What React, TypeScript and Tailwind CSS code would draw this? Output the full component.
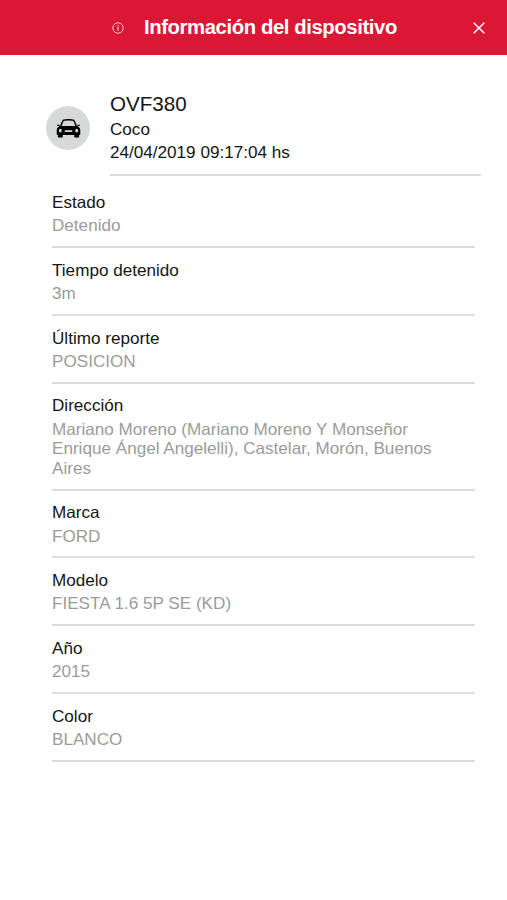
import React from 'react';

interface DeviceField {
  label: string;
  value: string;
}

const FIELDS: DeviceField[] = [
  { label: 'Estado', value: 'Detenido' },
  { label: 'Tiempo detenido', value: '3m' },
  { label: 'Último reporte', value: 'POSICION' },
  {
    label: 'Dirección',
    value: 'Mariano Moreno (Mariano Moreno Y Monseñor Enrique Ángel Angelelli), Castelar, Morón, Buenos Aires',
  },
  { label: 'Marca', value: 'FORD' },
  { label: 'Modelo', value: 'FIESTA 1.6 5P SE (KD)' },
  { label: 'Año', value: '2015' },
  { label: 'Color', value: 'BLANCO' },
];

const InfoIcon: React.FC = () => (
  <svg className="mt-0.5 h-3 w-3 opacity-75" viewBox="0 0 12 12" fill="none" stroke="white">
    <circle cx="6" cy="6" r="5.2" strokeWidth="1" />
    <path d="M6 4.900v4.200" strokeWidth="1.2" />
    <path d="M6 3v1.200" strokeWidth="1.2" />
  </svg>
);

const CloseIcon: React.FC = () => (
  <svg className="mt-px h-3 w-3" viewBox="0 0 12 12" fill="none" stroke="white" strokeWidth="1.5">
    <path d="M0.7 0.7l10.6 10.6M11.300 0.7L0.7 11.300" />
  </svg>
);

const CarIcon: React.FC = () => (
  <svg className="h-[19px] w-[25px]" viewBox="0 0 25 19" fill="black">
    {/* roof */}
    <path
      d="M4.500 7.800L6.600 2.600C7 1.500 7.500 1.100 8.600 1c2.600-.3 5.200-.3 7.800 0 1.100.1 1.600.5 2 1.600l2.100 5.200"
      fill="none"
      stroke="black"
      strokeWidth="1.500"
    />
    {/* body */}
    <path d="M3.500 7h18l1.700 1.600c.9.900 1.100 1.800 1.100 3V14.700c0 .8-.5 1.300-1.300 1.300H2c-.8 0-1.300-.5-1.300-1.300v-3.100c0-1.200.2-2.100 1.100-3z" />
    <path d="M.8 5.700h2.700v1.200H1.500zM24.200 5.700h-2.700v1.200h2z" />
    {/* wheels */}
    <rect x="1.900" y="16" width="4.800" height="2.400" rx="0.5" />
    <rect x="18.300" y="16" width="4.800" height="2.400" rx="0.5" />
    {/* lights and grille */}
    <ellipse cx="4.300" cy="11.600" rx="1.400" ry="1.900" fill="#d7d9d8" />
    <ellipse cx="20.700" cy="11.600" rx="1.400" ry="1.900" fill="#d7d9d8" />
    <rect x="8.700" y="11.200" width="7.600" height="1.700" rx="0.5" fill="#d7d9d8" />
  </svg>
);

const App: React.FC = () => {
  return (
    <div className="h-[900px] w-full overflow-hidden bg-white font-['Liberation_Sans',Arial,sans-serif] text-[17.120px] text-[#151515]">
      {/* Header */}
      <header className="flex h-[54.500px] items-center bg-[#dc1735] pr-[22px] pl-[112px] text-white">
        <InfoIcon />
        <h1 className="ml-5 flex-1 text-[20.300px] font-bold tracking-[-0.4px] whitespace-nowrap">
          Información del dispositivo
        </h1>
        <button aria-label="Cerrar">
          <CloseIcon />
        </button>
      </header>

      {/* Device summary */}
      <section className="flex pt-[36.500px] pr-[26px] pl-[46px]">
        <div className="mt-[15px] flex h-11 w-11 items-center justify-center rounded-full bg-[#d7d9d8]">
          <CarIcon />
        </div>
        <div className="ml-5 h-[85px] flex-1 border-b-2 border-[#dcdcdc]">
          <h2 className="text-[20.600px] leading-[26px]">OVF380</h2>
          <p className="pt-[1px] leading-[23px]">Coco</p>
          <p className="leading-[23px]">24/04/2019 09:17:04 hs</p>
        </div>
      </section>

      {/* Field list */}
      <ul className="mr-8 ml-[52px] pt-[4.300px]">
        {FIELDS.map((field) => (
          <li key={field.label} className="border-b-2 border-[#dcdcdc] pt-[11.700px] pb-[10.200px]">
            <h3 className="leading-[22px]">{field.label}</h3>
            <p className="pt-[2.300px] pr-6 leading-[19.600px] text-[#9b9b9b]">{field.value}</p>
          </li>
        ))}
      </ul>
    </div>
  );
};

export default App;
